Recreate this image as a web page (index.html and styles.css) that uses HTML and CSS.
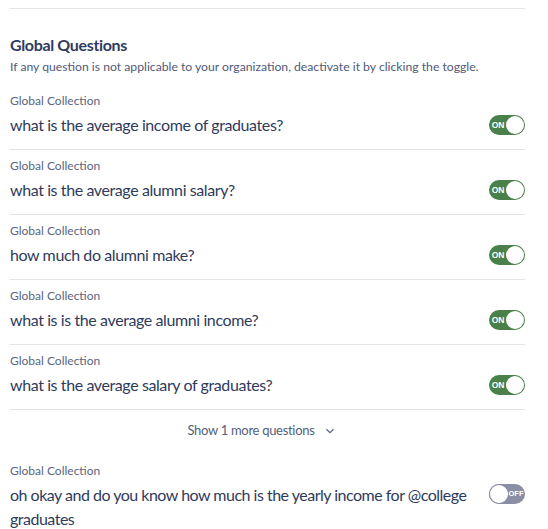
FILE: index.html
```html
<!DOCTYPE html>
<html>
<head>
<meta charset="utf-8">
<link rel="stylesheet" href="styles.css">
</head>
<body>
<div class="page">
  <div class="topline"></div>
  <section class="section">
    <h2 class="title">Global Questions</h2>
    <p class="subtitle">If any question is not applicable to your organization, deactivate it by clicking the toggle.</p>
    <ul class="list">
      <li class="row">
        <div class="label">Global Collection</div>
        <div class="qline"><span class="question">what is the average income of graduates?</span><span class="toggle on"><span class="tlabel">ON</span><span class="knob"></span></span></div>
      </li>
      <li class="row">
        <div class="label">Global Collection</div>
        <div class="qline"><span class="question">what is the average alumni salary?</span><span class="toggle on"><span class="tlabel">ON</span><span class="knob"></span></span></div>
      </li>
      <li class="row">
        <div class="label">Global Collection</div>
        <div class="qline"><span class="question">how much do alumni make?</span><span class="toggle on"><span class="tlabel">ON</span><span class="knob"></span></span></div>
      </li>
      <li class="row">
        <div class="label">Global Collection</div>
        <div class="qline"><span class="question">what is is the average alumni income?</span><span class="toggle on"><span class="tlabel">ON</span><span class="knob"></span></span></div>
      </li>
      <li class="row">
        <div class="label">Global Collection</div>
        <div class="qline"><span class="question">what is the average salary of graduates?</span><span class="toggle on"><span class="tlabel">ON</span><span class="knob"></span></span></div>
      </li>
    </ul>
    <div class="more"><span>Show 1 more questions</span><svg class="chev" width="10" height="6" viewBox="0 0 10 6"><path d="M1.5 1.2 L5 4.6 L8.5 1.2" fill="none" stroke="#5b6582" stroke-width="1.3"/></svg></div>
    <div class="row last">
      <div class="label">Global Collection</div>
      <div class="qline top"><span class="question">oh okay and do you know how much is the yearly income for @college graduates</span><span class="toggle off"><span class="knob"></span><span class="tlabel">OFF</span></span></div>
    </div>
  </section>
</div>
</body>
</html>
```
FILE: styles.css
```css
* { box-sizing: border-box; }
html, body { margin: 0; padding: 0; background: #fff; }
body {
  font-family: Lato, "Noto Sans", sans-serif;
  color: #2f3b5c;
}
.page { padding: 8px 23px 0 10px; }
.topline { height: 1px; background: #e4e4e6; }
.section { padding-top: 26px; }
.title {
  margin: 0;
  font-size: 16px;
  line-height: 20px;
  font-weight: 700;
  letter-spacing: -0.35px;
  color: #2f3b5e;
}
.subtitle {
  margin: 4px 0 10px;
  font-size: 12.2px;
  line-height: 16px;
  color: #4f5a78;
}
.list { list-style: none; margin: 0; padding: 0; }
.row {
  padding: 8px 0 12px;
  border-bottom: 1px solid #e4e4e6;
}
.row.last { border-bottom: none; padding-top: 0; }
.label {
  font-size: 12px;
  line-height: 16px;
  color: #5a6582;
}
.qline {
  margin-top: 4px;
  display: flex;
  align-items: center;
  justify-content: space-between;
  gap: 10px;
}
.qline.top { align-items: flex-start; }
.question {
  font-size: 16px;
  line-height: 24px;
  letter-spacing: -0.4px;
  color: #2f3b5c;
}
.last .question { letter-spacing: -0.5px; }
.toggle {
  flex: none;
  width: 36px;
  height: 20px;
  border-radius: 10px;
  display: flex;
  align-items: center;
  padding: 1px;
}
.toggle.on { background: #4a8049; }
.toggle.off { background: #8a8fa3; margin-top: 1px; }
.knob {
  flex: none;
  width: 18px;
  height: 18px;
  border-radius: 50%;
  background: #fff;
}
.toggle.off .knob { box-shadow: 0 0 0 1px #8a8fa3; }
.tlabel {
  flex: 1;
  text-align: center;
  font-family: "Liberation Sans", Arial, sans-serif;
  font-size: 8.5px;
  font-weight: 700;
  color: #fff;
  line-height: 1;
}
.toggle.off .tlabel { font-size: 7.5px; }
.more {
  display: flex;
  justify-content: center;
  align-items: center;
  gap: 10px;
  height: 40px;
  padding-right: 13px;
  font-size: 13px;
  letter-spacing: -0.3px;
  color: #535e7c;
  margin-bottom: 13px;
}
.chev { margin-top: 2px; }
```
